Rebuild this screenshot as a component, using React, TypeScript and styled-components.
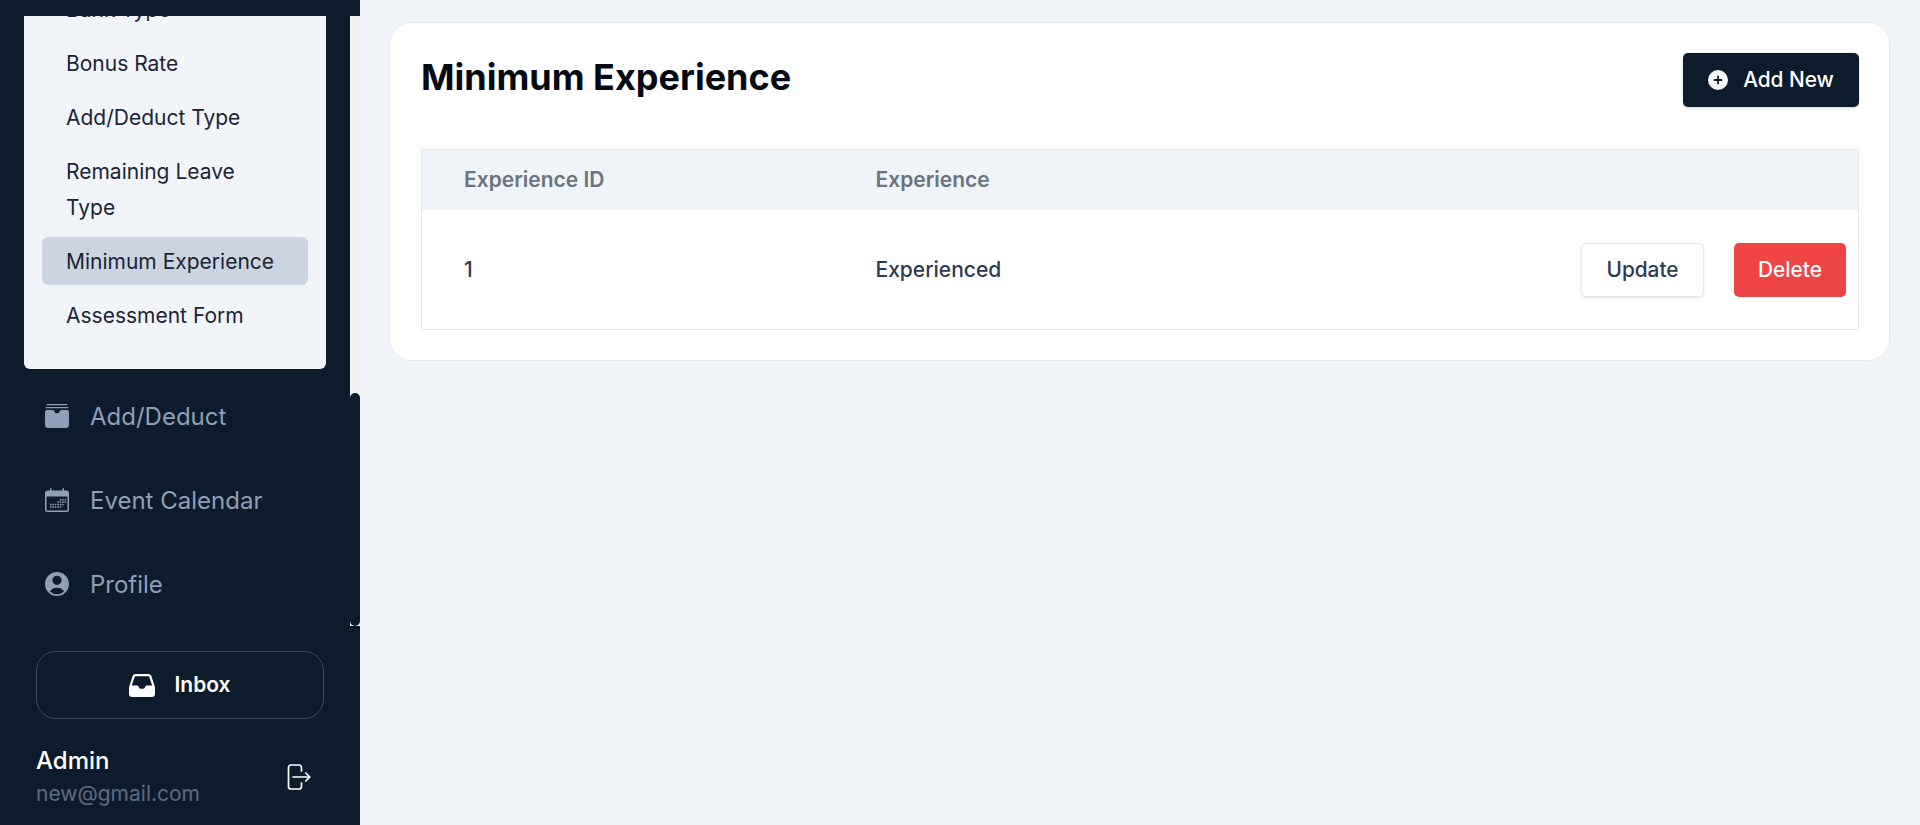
import React from "react";
import styled, { createGlobalStyle } from "styled-components";

const Global = createGlobalStyle`
  html, body { margin: 0; padding: 0; background: #f1f5f9; }
  body { font-family: Inter, "Noto Sans", sans-serif; overflow: hidden; }
  * { box-sizing: border-box; }
`;

const Page = styled.div`
  display: flex;
  width: 1920px;
  height: 825px;
  overflow: hidden;
  background: #f1f5f9;
`;

const Sidebar = styled.aside`
  width: 360px;
  flex: none;
  height: 825px;
  padding-top: 16px;
  background: #0d1c2d;
  display: flex;
  flex-direction: column;
`;

const NavScroller = styled.div`
  display: flex;
  height: 610px;
  flex: none;
`;

const NavContent = styled.div`
  width: 350px;
  flex: none;
  overflow: hidden;
`;

const ScrollTrack = styled.div`
  width: 10px;
  flex: none;
  background: #f1f1f1;
  padding-top: 377px;
`;

const ScrollThumb = styled.div`
  height: 233px;
  background: #0d1c2d;
  border-radius: 5px;
`;

const SubPanel = styled.ul`
  list-style: none;
  margin: -31px 24px 0 24px;
  padding: 0 18px 30px;
  background: #f1f5f9;
  border-radius: 0 0 6px 6px;
  display: flex;
  flex-direction: column;
  gap: 6px;
`;

const SubItem = styled.li<{ $active?: boolean }>`
  padding: 7px 24px 5px;
  min-height: 48px;
  font-size: 21px;
  line-height: 36px;
  font-weight: 400;
  color: #1c2434;
  border-radius: 6px;
  background: ${(p) => (p.$active ? "#cbd5e1" : "transparent")};
`;

const MainLinks = styled.nav`
  display: flex;
  flex-direction: column;
  padding: 5px 0 0 45px;
`;

const MainLink = styled.a`
  display: flex;
  align-items: center;
  gap: 21px;
  height: 84px;
  font-size: 24px;
  font-weight: 400;
  color: #8f9fb6;
  & > svg { flex: none; width: 24px; height: 24px; }
`;

const InboxButton = styled.button`
  margin: 25px 36px 0;
  width: 288px;
  height: 68px;
  flex: none;
  display: flex;
  align-items: center;
  justify-content: center;
  gap: 19px;
  background: transparent;
  border: 1px solid #3c4a5b;
  border-radius: 20px;
  color: #fff;
  font-family: inherit;
  font-size: 21px;
  font-weight: 600;
  padding: 0 0 2px;
  & > svg { margin-top: 2px; }
`;

const UserRow = styled.div`
  display: flex;
  align-items: center;
  justify-content: space-between;
  margin: 25px 49px 0 36px;
`;

const UserInfo = styled.div`
  display: flex;
  flex-direction: column;
`;

const UserName = styled.span`
  font-size: 24px;
  line-height: 34px;
  font-weight: 500;
  color: #fff;
`;

const UserMail = styled.span`
  font-size: 21px;
  line-height: 32px;
  color: #5c6b7e;
`;

const Main = styled.main`
  flex: 1;
  padding: 22px 30px 0 29px;
`;

const Card = styled.section`
  background: #fff;
  border: 1px solid #e6e9ee;
  border-radius: 22px;
  height: 339px;
  padding: 30px 30px 0 31px;
`;

const CardHead = styled.header`
  display: flex;
  justify-content: space-between;
  align-items: flex-start;
  height: 96px;
`;

const Title = styled.h1`
  margin: 0;
  font-size: 36px;
  line-height: 48px;
  font-weight: 700;
  color: #050a14;
`;

const AddButton = styled.button`
  width: 176px;
  height: 54px;
  display: flex;
  align-items: center;
  justify-content: center;
  gap: 15px;
  background: #0d1c2d;
  color: #fff;
  border: 0;
  border-radius: 5px;
  font-family: inherit;
  font-size: 20.8px;
  font-weight: 500;
  padding: 0 0 2px;
  box-shadow: 0 1px 3px rgba(13, 28, 45, 0.2);
  & > svg { flex: none; margin-top: 2px; }
`;

const Table = styled.table`
  width: 100%;
  table-layout: fixed;
  border-collapse: collapse;
  border: 1px solid #e5e8ee;
  font-size: 21px;
`;

const HeadCell = styled.th<{ $w?: number; $first?: boolean }>`
  ${(p) => (p.$w ? `width: ${p.$w}px;` : "")}
  height: 60px;
  padding: 0 0 0 ${(p) => (p.$first ? "42px" : "43px")};
  text-align: left;
  background: #eff4f8;
  color: #6b7280;
  font-weight: 600;
`;

const BodyCell = styled.td<{ $first?: boolean }>`
  height: 120px;
  padding: 0 0 0 ${(p) => (p.$first ? "42px" : "43px")};
  color: #2d3a4f;
  font-weight: 500;
`;

const ActionCell = styled.td`
  height: 120px;
  padding: 2px 12px 0 0;
`;

const Actions = styled.div`
  display: flex;
  justify-content: flex-end;
  gap: 30px;
`;

const ActionButton = styled.button<{ $danger?: boolean }>`
  height: 54px;
  width: ${(p) => (p.$danger ? "112px" : "123px")};
  border-radius: 5px;
  font-family: inherit;
  font-size: 20.8px;
  font-weight: 500;
  padding: 0 0 2px;
  background: ${(p) => (p.$danger ? "#ef4444" : "#fff")};
  color: ${(p) => (p.$danger ? "#fff" : "#2d3a4f")};
  border: ${(p) => (p.$danger ? "0" : "1px solid #e5e7eb")};
  box-shadow: ${(p) => (p.$danger ? "none" : "0 1px 3px rgba(13, 28, 45, 0.1)")};
`;

const BoxIcon = () => (
  <svg viewBox="0 0 24 24" fill="#8f9fb6" aria-hidden>
    <rect x="1.5" y="0" width="21" height="1.300" rx="0.650" />
    <rect x="0.500" y="3" width="23" height="1.300" rx="0.650" />
    <path d="M2 6h5.700c.6 0 1 .3 1.300.8l.9 1.600c.3.500.8.800 1.300.800h1.600c.5 0 1-.3 1.300-.8l.9-1.600c.3-.5.7-.8 1.300-.8H22c1.100 0 2 .9 2 2V21c0 1.700-1.300 3-3 3H3c-1.700 0-3-1.300-3-3V8c0-1.100.9-2 2-2Z" />
  </svg>
);

const dots = [
  [14.8, 11], [17.2, 11], [19.6, 11],
  [12.4, 13.4], [14.8, 13.4], [17.2, 13.4], [19.6, 13.4],
  [5, 15.8], [7.4, 15.8], [9.8, 15.8], [12.4, 15.8], [14.8, 15.8], [17.2, 15.8],
  [5, 18.2], [7.4, 18.2], [9.8, 18.2], [12.4, 18.2], [14.8, 18.2],
];

const CalendarIcon = () => (
  <svg viewBox="0 0 24 24" fill="#8f9fb6" aria-hidden>
    <rect x="5" y="0" width="1.500" height="4" rx="0.700" />
    <rect x="17.500" y="0" width="1.500" height="4" rx="0.700" />
    <path fillRule="evenodd" d="M2.500 2.500h19A2.500 2.500 0 0 1 24 5v16.500a2.500 2.500 0 0 1-2.500 2.500h-19A2.500 2.500 0 0 1 0 21.500V5a2.500 2.500 0 0 1 2.500-2.500ZM2.500 8.500a1 1 0 0 0-1 1v12a1 1 0 0 0 1 1h19a1 1 0 0 0 1-1v-12a1 1 0 0 0-1-1Z" />
    {dots.map(([x, y]) => (
      <rect key={`${x}-${y}`} x={x} y={y} width="1.500" height="1.500" />
    ))}
  </svg>
);

const UserIcon = () => (
  <svg viewBox="2.25 2.25 19.5 19.5" fill="#8f9fb6" aria-hidden>
    <path fillRule="evenodd" clipRule="evenodd" d="M18.685 19.097A9.723 9.723 0 0 0 21.75 12c0-5.385-4.365-9.750-9.750-9.750S2.250 6.615 2.250 12a9.723 9.723 0 0 0 3.065 7.097A9.716 9.716 0 0 0 12 21.750a9.716 9.716 0 0 0 6.685-2.653Zm-12.540-1.285A7.486 7.486 0 0 1 12 15a7.486 7.486 0 0 1 5.855 2.812A8.224 8.224 0 0 1 12 20.250a8.224 8.224 0 0 1-5.855-2.438ZM15.750 9a3.750 3.750 0 1 1-7.500 0 3.750 3.750 0 0 1 7.500 0Z" />
  </svg>
);

const InboxIcon = () => (
  <svg width="26" height="23" viewBox="0 0 26 23" aria-hidden>
    <path fill="#fff" fillRule="evenodd" d="M6.500 0h13c1.300 0 2.400.8 2.900 2L25.600 12c.3.800.4 1.500.4 2.300V20c0 1.700-1.300 3-3 3H3c-1.700 0-3-1.300-3-3v-5.700c0-.8.100-1.500.4-2.300L3.600 2C4.100.8 5.200 0 6.500 0Zm0 2.200c-.4 0-.8.300-.9.700L2.800 11.600h5.100c.8 0 1.500.4 1.800 1.100l.5 1c.3.600 1 1.100 1.800 1.100h1.900c.8 0 1.500-.5 1.800-1.100l.5-1c.3-.7 1-1.100 1.800-1.100h5.100l-2.800-8.700c-.1-.4-.5-.7-.9-.7Z" />
  </svg>
);

const LogoutIcon = () => (
  <svg width="24" height="26" viewBox="0 0 24 26" fill="none" stroke="#fff" strokeWidth="1.700" strokeLinecap="round" strokeLinejoin="round" aria-hidden>
    <path d="M14.500 7V3.500A2.500 2.500 0 0 0 12 1H4a2.500 2.500 0 0 0-2.500 2.500v19A2.500 2.500 0 0 0 4 25h8a2.500 2.500 0 0 0 2.500-2.500V19" />
    <path d="M6 13h16.500M18.800 9l4 4-4 4" />
  </svg>
);

const PlusCircle = () => (
  <svg width="20" height="20" viewBox="0 0 20 20" aria-hidden>
    <circle cx="10" cy="10" r="10" fill="#f5f7fa" />
    <path d="M10 6.500v7M6.500 10h7" stroke="#0d1c2d" strokeWidth="1.800" strokeLinecap="round" />
  </svg>
);

const subItems = ["Bank Type", "Bonus Rate", "Add/Deduct Type", "Remaining Leave Type", "Minimum Experience", "Assessment Form"];

export default function App() {
  return (
    <Page>
      <Global />
      <Sidebar>
        <NavScroller>
          <NavContent>
            <SubPanel>
              {subItems.map((s) => (
                <SubItem key={s} $active={s === "Minimum Experience"}>{s}</SubItem>
              ))}
            </SubPanel>
            <MainLinks>
              <MainLink><BoxIcon />Add/Deduct</MainLink>
              <MainLink><CalendarIcon />Event Calendar</MainLink>
              <MainLink><UserIcon />Profile</MainLink>
            </MainLinks>
          </NavContent>
          <ScrollTrack><ScrollThumb /></ScrollTrack>
        </NavScroller>
        <InboxButton><InboxIcon />Inbox</InboxButton>
        <UserRow>
          <UserInfo>
            <UserName>Admin</UserName>
            <UserMail>new@gmail.com</UserMail>
          </UserInfo>
          <LogoutIcon />
        </UserRow>
      </Sidebar>
      <Main>
        <Card>
          <CardHead>
            <Title>Minimum Experience</Title>
            <AddButton><PlusCircle />Add New</AddButton>
          </CardHead>
          <Table>
            <thead>
              <tr>
                <HeadCell $w={411} $first>Experience ID</HeadCell>
                <HeadCell $w={500}>Experience</HeadCell>
                <HeadCell />
              </tr>
            </thead>
            <tbody>
              <tr>
                <BodyCell $first>1</BodyCell>
                <BodyCell>Experienced</BodyCell>
                <ActionCell>
                  <Actions>
                    <ActionButton>Update</ActionButton>
                    <ActionButton $danger>Delete</ActionButton>
                  </Actions>
                </ActionCell>
              </tr>
            </tbody>
          </Table>
        </Card>
      </Main>
    </Page>
  );
}
